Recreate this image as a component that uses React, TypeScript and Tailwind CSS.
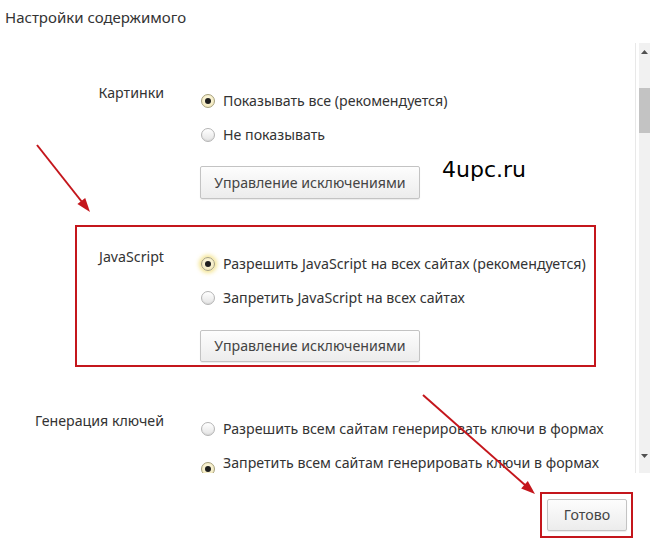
import React from "react";

const font = { fontFamily: '"Noto Sans", "Open Sans", sans-serif' };

function Radio({ checked, glow }: { checked?: boolean; glow?: boolean }) {
  if (checked) {
    return (
      <span
        className={
          "flex h-[14px] w-[14px] shrink-0 items-center justify-center rounded-full border border-[#a59f7c] bg-[radial-gradient(circle_at_50%_40%,#fffbe6,#eee3b0)] " +
          (glow ? "shadow-[0_0_4px_2px_rgba(240,220,110,0.8)]" : "")
        }
      >
        <span className="h-[6px] w-[6px] rounded-full bg-[#1e1e1e]" />
      </span>
    );
  }
  return (
    <span className="h-[14px] w-[14px] shrink-0 rounded-full border border-[#b4b4b4] bg-[linear-gradient(180deg,#ffffff,#e4e4e4)] shadow-[inset_0_-1px_1px_rgba(0,0,0,0.06)]" />
  );
}

function Option({
  checked,
  glow,
  low,
  children,
}: {
  checked?: boolean;
  glow?: boolean;
  low?: boolean;
  children: React.ReactNode;
}) {
  return (
    <div className="flex h-[20px] items-center gap-[8px] pl-[1px]">
      <span className={low ? "flex translate-y-[6px]" : "flex"}>
        <Radio checked={checked} glow={glow} />
      </span>
      <span className="whitespace-nowrap">{children}</span>
    </div>
  );
}

function Btn({ children, w }: { children: React.ReactNode; w: string }) {
  return (
    <button
      className={
        "flex items-center justify-center rounded-[2px] border border-[#c3c3c3] bg-[linear-gradient(180deg,#fdfdfd,#ececec)] text-[#444] shadow-[0_1px_1px_rgba(0,0,0,0.08)] " +
        w
      }
    >
      {children}
    </button>
  );
}

export default function App() {
  return (
    <div
      className="relative h-[543px] w-[650px] overflow-hidden bg-white text-[14.2px] leading-[20px] text-[#333]"
      style={font}
    >
      <div className="h-[43px] pl-[5px] pt-[7px] text-[15px]">Настройки содержимого</div>

      <div className="flex h-[430px]">
        <div className="flex-1 overflow-hidden border-r border-[#e8e8e8] pt-[40px]">
          {/* Картинки */}
          <div className="flex">
            <div className="w-[164px] shrink-0 text-right">Картинки</div>
            <div className="ml-[36px] flex flex-col pt-[8px]">
              <Option checked>Показывать все (рекомендуется)</Option>
              <div className="mt-[14px]">
                <Option>Не показывать</Option>
              </div>
              <div className="mt-[21px]">
                <Btn w="h-[33px] w-[220px]">Управление исключениями</Btn>
              </div>
            </div>
          </div>

          {/* JavaScript */}
          <div className="ml-[75px] mt-[26px] flex w-[521px] border-2 border-[#c4161c] pb-[3px] pt-[20px]">
            <div className="w-[87px] shrink-0 text-right">JavaScript</div>
            <div className="ml-[36px] flex flex-col pt-[7px]">
              <Option checked glow>
                Разрешить JavaScript на всех сайтах (рекомендуется)
              </Option>
              <div className="mt-[14px]">
                <Option>Запретить JavaScript на всех сайтах</Option>
              </div>
              <div className="mt-[22px]">
                <Btn w="h-[32px] w-[220px]">Управление исключениями</Btn>
              </div>
            </div>
          </div>

          {/* Генерация ключей */}
          <div className="mt-[44px] flex">
            <div className="w-[164px] shrink-0 text-right">Генерация ключей</div>
            <div className="ml-[36px] flex flex-col pt-[8px]">
              <Option>Разрешить всем сайтам генерировать ключи в формах</Option>
              <div className="mt-[14px]">
                <Option checked low>
                  Запретить всем сайтам генерировать ключи в формах
                </Option>
              </div>
            </div>
          </div>
        </div>

        {/* scrollbar */}
        <div className="ml-[3px] flex w-[11px] flex-col bg-[#f1f1f1]">
          <div className="flex h-[14px] items-center justify-center pt-[4px]">
            <svg width="7" height="4" viewBox="0 0 7 4">
              <polygon points="0,4 7,4 3.5,0" fill="#505050" />
            </svg>
          </div>
          <div className="mt-[31px] h-[45px] bg-[#c3c3c3]" />
          <div className="flex-1" />
          <div className="flex h-[20px] items-start justify-center pt-[1px]">
            <svg width="7" height="4" viewBox="0 0 7 4">
              <polygon points="0,0 7,0 3.5,4" fill="#505050" />
            </svg>
          </div>
        </div>
      </div>

      {/* footer */}
      <div className="flex justify-end pr-[17px] pt-[19px]">
        <div className="border-2 border-[#c4161c] py-[5px] pl-[5px] pr-[4px]">
          <Btn w="h-[32px] w-[80px]">Готово</Btn>
        </div>
      </div>

      {/* watermark */}
      <div
        className="absolute left-[442px] top-[157px] text-[22px] leading-[26px] text-black"
        style={{ fontFamily: '"DejaVu Sans", Verdana, sans-serif' }}
      >
        4upc.ru
      </div>

      {/* arrows */}
      <svg className="pointer-events-none absolute left-0 top-0" width="650" height="543" viewBox="0 0 650 543">
        <line x1="37" y1="145" x2="82" y2="202" stroke="#c4161c" strokeWidth="2" />
        <polygon points="90,212 77.4,204.1 85.2,197.9" fill="#c4161c" />
        <line x1="423" y1="395" x2="525" y2="485" stroke="#c4161c" strokeWidth="2" />
        <polygon points="535,494 521.2,488.4 527.8,481" fill="#c4161c" />
      </svg>
    </div>
  );
}
